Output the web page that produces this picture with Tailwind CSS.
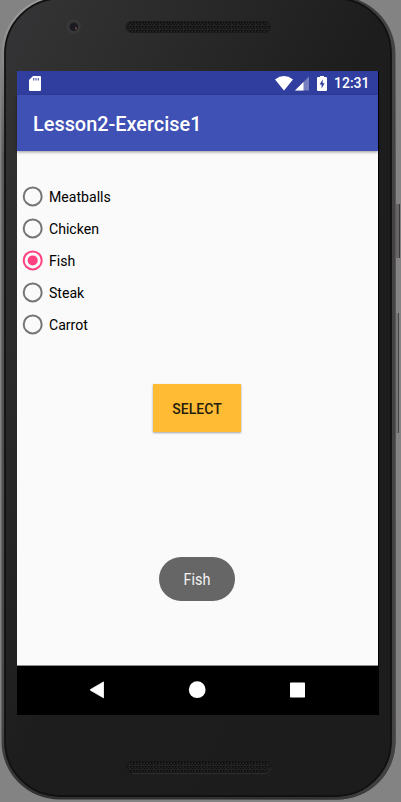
<!DOCTYPE html>
<html lang="en">
<head>
<meta charset="utf-8">
<title>Lesson2-Exercise1</title>
<script src="https://cdn.jsdelivr.net/npm/@tailwindcss/browser@4"></script>
</head>
<body class="bg-[#838383] overflow-hidden">
<div class="relative w-[401px] h-[802px] overflow-hidden font-[Roboto,sans-serif]">
  <!-- Phone shell -->
  <svg class="absolute inset-0" width="401" height="802" viewBox="0 0 401 802" aria-hidden="true">
    <defs>
      <linearGradient id="body" x1="0" y1="0" x2="1" y2="1">
        <stop offset="0" stop-color="#353537"/><stop offset=".22" stop-color="#2b2b2b"/><stop offset=".5" stop-color="#1d1d1d"/><stop offset="1" stop-color="#1c1c1c"/>
      </linearGradient>
      <linearGradient id="rim" x1="0" y1="0" x2="0" y2="1">
        <stop offset="0" stop-color="#a0a0a0"/><stop offset=".08" stop-color="#888"/><stop offset=".2" stop-color="#5a5a5a"/><stop offset=".9" stop-color="#484647"/><stop offset="1" stop-color="#303030"/>
      </linearGradient>
      <linearGradient id="edge" x1="0" y1="0" x2="1" y2="0">
        <stop offset="0" stop-color="#333132" stop-opacity="0"/><stop offset=".5" stop-color="#333132" stop-opacity="0"/><stop offset=".8" stop-color="#333132"/><stop offset="1" stop-color="#454344"/>
      </linearGradient>
      <pattern id="mesh" width="6" height="4" patternUnits="userSpaceOnUse" x="129" y="21">
        <rect width="6" height="4" fill="#222"/>
        <rect x="1" y="1" width="1.500" height="1.500" fill="#090909"/><rect x="4" y="1" width="1.500" height="1.500" fill="#090909"/><rect x="2.500" y="3" width="1.500" height="1" fill="#0d0d0d"/><rect x="5" y="3" width="1" height="1" fill="#0d0d0d"/>
      </pattern>
    </defs>
    <rect x="396" y="204" width="4" height="54" fill="#666465"/><rect x="399" y="204" width="1" height="54" fill="#3a3a3a"/>
    <rect x="396" y="313" width="3" height="120" fill="#777"/><rect x="398" y="313" width="1" height="120" fill="#444"/>
    <rect x="1.500" y="-4" width="394" height="803.500" rx="58" fill="url(#rim)"/>
    <rect x="1.500" y="-4" width="394" height="803.500" rx="58" fill="url(#edge)"/>
    <rect x="5" y="-1.500" width="386" height="797.500" rx="55" fill="url(#body)" stroke="#111" stroke-width="1.800"/>
    <circle cx="73.500" cy="26.500" r="7.500" fill="#373737"/><circle cx="73.800" cy="26.800" r="4.300" fill="#1b1a20"/><circle cx="76" cy="28.300" r="1.100" fill="#69504d"/>
    <rect x="126" y="21.500" width="144.500" height="11" rx="5.500" fill="url(#mesh)" stroke="#1b1b1b"/>
    <rect x="126" y="761.500" width="144.500" height="11" rx="5.500" fill="url(#mesh)" stroke="#161616"/>
    <path d="M132 773.500h133q5.500-.5 5.500-6" fill="none" stroke="#333" stroke-width=".8"/>
  </svg>

  <main class="relative ml-[17px] mt-[71px] w-[362px] h-[644px] flex flex-col bg-black">
    <div class="w-[361px] h-[24px] shrink-0 bg-[#303f9f] flex items-center justify-between pl-[12px] pr-[9px] text-white">
      <svg width="12" height="15" viewBox="0 0 12 15"><path d="M4 0h7q1 0 1 1v13q0 1-1 1H1q-1 0-1-1V4z" fill="#fff"/><path d="M4.700 2v2.600M7 2v2.600M9.300 2v2.600" stroke="#5965b2" stroke-width="1.200"/></svg>
      <div class="flex items-center">
        <svg width="18" height="15" viewBox="0 0 18 15"><path d="M0 3.500Q9-3.300 18 3.500L9 14.500z" fill="#fff"/></svg>
        <svg class="ml-[2px]" width="14" height="15" viewBox="0 0 14 15"><path d="M14 .5V14.500H0z" fill="#7780bf"/><path d="M8.500 6V14.500H0z" fill="#fff"/></svg>
        <svg class="ml-[8px]" width="10" height="15" viewBox="0 0 10 15"><path d="M3 0h4v1h2q1 0 1 1V14q0 1-1 1H1q-1 0-1-1V2q0-1 1-1h2z" fill="#fff"/><path d="M5.700 3.500L2.600 8.600h2v4L7.600 7.300H5.700z" fill="#303f9f"/></svg>
        <span class="ml-[7px] w-[35px] text-[14px] leading-[24px] font-medium whitespace-nowrap">12:31</span>
      </div>
    </div>
    <header class="relative w-[361px] h-[56px] shrink-0 bg-[#3f51b5] flex items-center pl-[16px] pt-[4px] shadow-[0_1px_3px_rgba(0,0,0,0.4)]">
      <h1 class="text-[19.900px] font-medium text-white leading-6">Lesson2-Exercise1</h1>
    </header>
    <section class="w-[361px] h-[515px] shrink-0 bg-[#fafafa] border-b border-[#8b8f8d] flex flex-col items-center pt-[29px]">
      <ul class="w-full pl-[5px] pt-[1px] text-[14.100px] text-black">
        <li class="h-[32.100px] flex items-center gap-[5px]"><svg width="22" height="22"><circle cx="10.700" cy="10.400" r="9" fill="none" stroke="#757575" stroke-width="2"/></svg><span class="pt-px">Meatballs</span></li>
        <li class="h-[32.100px] flex items-center gap-[5px]"><svg width="22" height="22"><circle cx="10.700" cy="10.400" r="9" fill="none" stroke="#757575" stroke-width="2"/></svg><span class="pt-px">Chicken</span></li>
        <li class="h-[32.100px] flex items-center gap-[5px]"><svg width="22" height="22"><circle cx="10.700" cy="10.400" r="9" fill="none" stroke="#ff4081" stroke-width="2"/><circle cx="10.700" cy="10.400" r="5" fill="#ff4081"/></svg><span class="pt-px">Fish</span></li>
        <li class="h-[32.100px] flex items-center gap-[5px]"><svg width="22" height="22"><circle cx="10.700" cy="10.400" r="9" fill="none" stroke="#757575" stroke-width="2"/></svg><span class="pt-px">Steak</span></li>
        <li class="h-[32.100px] flex items-center gap-[5px]"><svg width="22" height="22"><circle cx="10.700" cy="10.400" r="9" fill="none" stroke="#757575" stroke-width="2"/></svg><span class="pt-px">Carrot</span></li>
      </ul>
      <button class="mt-[43px] mr-[1px] w-[88px] h-[48px] shrink-0 bg-[#ffbb33] pt-[3px] text-[14px] font-medium text-[#251d0c] shadow-[0_1px_2px_rgba(0,0,0,0.35)]">SELECT</button>
      <div class="mt-[125px] mr-[1px] w-[76px] h-[44px] shrink-0 rounded-full bg-[#666] text-[#f2f2f2] flex items-center justify-center"><span class="inline-block text-[16px] pt-[2px] scale-x-[0.9]">Fish</span></div>
    </section>
    <nav class="h-[48px] flex items-center pl-[72px]">
      <svg width="16" height="18" viewBox="0 0 16 18"><path d="M14.500 1v15.800L1.500 9.300q-.6-.4 0-.8L14.500 .9z" fill="#fff" stroke="#fff" stroke-width=".8" stroke-linejoin="round"/></svg>
      <svg class="ml-[83px]" width="18" height="18"><circle cx="9.200" cy="8.700" r="8.400" fill="#fff"/></svg>
      <svg class="ml-[83px]" width="16" height="16"><rect x="1" y=".5" width="15" height="15" rx=".7" fill="#fff"/></svg>
    </nav>
  </main>
</div>
</body>
</html>
